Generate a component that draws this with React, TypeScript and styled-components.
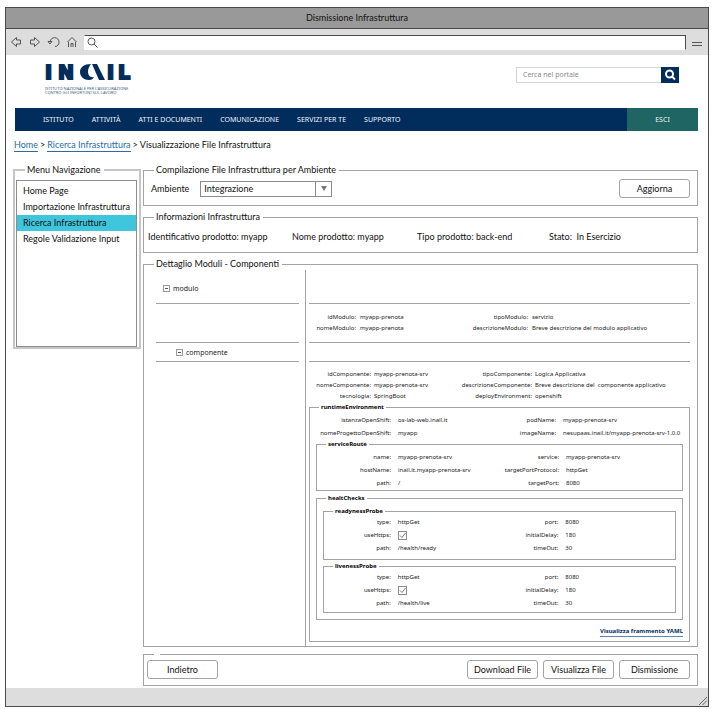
import React from "react";
import styled, { createGlobalStyle } from "styled-components";

const line = "#a3a3a3";
const soft = "#c6c6c6";
const navy = "#012d5c";
const smallFont = `"Noto Sans", "Open Sans", sans-serif`;

const GlobalStyle = createGlobalStyle`
  * { box-sizing: border-box; }
  body {
    margin: 0;
    background: #fff;
    color: #111;
    font-family: Lato, "Open Sans", sans-serif;
    font-size: 9px;
    line-height: 12px;
  }
  button, input, select { font: inherit; color: inherit; margin: 0; }
  dl, dd, ul { margin: 0; padding: 0; }
`;

const Window = styled.div`
  margin: 7px 3px 2px 5px;
  border: 1px solid #4a4a4a;
`;

const TitleBar = styled.header`
  display: flex;
  align-items: center;
  justify-content: center;
  height: 21px;
  background: #999;
  border-bottom: 1px solid #4a4a4a;
`;

const Toolbar = styled.div`
  display: flex;
  align-items: center;
  height: 26px;
  padding: 0 6px 0 5px;
  background: #ddd;
`;

const ToolButton = styled.button`
  display: flex;
  padding: 0;
  margin-right: 7px;
  border: 0;
  background: none;
`;

const AddressBar = styled.label`
  display: flex;
  flex: 1;
  align-items: center;
  height: 15px;
  padding-left: 2px;
  background: #fff;
  border: 1px solid #4a4a4a;
  border-bottom-color: #fff;
  border-left-color: #fff;
`;

const AddressInput = styled.input`
  flex: 1;
  min-width: 0;
  border: 0;
  outline: 0;
  background: none;
  padding: 0 4px;
`;

const MenuButton = styled(ToolButton)`
  margin: 4px 0 0 6px;
`;

const Page = styled.div`
  padding: 0 10px 2px 7px;
`;

const Banner = styled.div`
  display: flex;
  justify-content: space-between;
  align-items: flex-start;
  height: 53px;
  padding: 3px 19px 0 32px;
`;

const LogoNote = styled.p`
  margin: 3px 0 0;
  color: #45617f;
  font-family: ${smallFont};
  font-size: 4px;
  line-height: 4px;
`;

const Search = styled.form`
  display: flex;
  width: 163px;
  height: 16px;
  margin-top: 9px;
`;

const SearchInput = styled.input`
  flex: 1;
  min-width: 0;
  padding: 0 6px;
  border: 1px solid #d4d4d4;
  border-right: 0;
  font-family: ${smallFont};
  font-size: 7px;
  outline: 0;
  &::placeholder { color: #8a8a8a; }
`;

const SearchButton = styled.button`
  display: flex;
  align-items: center;
  justify-content: center;
  width: 18px;
  padding: 0;
  border: 0;
  background: ${navy};
`;

const Nav = styled.nav`
  display: flex;
  align-items: center;
  gap: 18px;
  height: 23px;
  margin-left: 2px;
  padding-left: 28px;
  background: ${navy};
  font-family: ${smallFont};
  font-size: 7px;
`;

const NavLink = styled.a`
  color: #f0f4f8;
  text-decoration: none;
`;

const ExitLink = styled(NavLink)`
  display: flex;
  align-items: center;
  justify-content: center;
  width: 71px;
  height: 100%;
  margin-left: auto;
  background: #1e6563;
`;

const Breadcrumb = styled.nav`
  display: flex;
  gap: 2px;
  margin: 8px 0 12px 1px;
`;

const CrumbLink = styled.a`
  color: #2a6ca3;
  text-decoration: none;
  border-bottom: 1px solid #2a6ca3;
`;

const Columns = styled.div`
  display: grid;
  grid-template-columns: 128px minmax(0, 1fr);
  gap: 2px;
  align-items: start;
`;

const Group = styled.fieldset<{ $gap?: number }>`
  min-width: 0;
  margin: 0 0 ${(p) => p.$gap ?? 0}px;
  padding: 0;
  border: 1px solid ${line};
`;

const Legend = styled.legend`
  margin-left: 10px;
  padding: 0 3px 0 2px;
`;

const MenuGroup = styled(Group)`
  border: 2px solid ${soft};
`;

const MenuList = styled.ul`
  height: 167px;
  margin: 4px 2px 0 1px;
  padding-top: 2px;
  border: 1px solid #8c8c8c;
  list-style: none;
`;

const MenuItem = styled.li<{ $active?: boolean }>`
  height: 16px;
  padding: 0 6px;
  line-height: 16px;
  background: ${(p) => (p.$active ? "#40c6dc" : "none")};
`;

const MenuLink = styled.a`
  display: block;
  overflow: hidden;
  color: inherit;
  text-decoration: none;
  white-space: nowrap;
`;

const FilterRow = styled.div`
  display: flex;
  align-items: center;
  height: 29px;
  padding: 0 7px 4px 7px;
`;

const SelectBox = styled.div`
  display: grid;
  grid-template-columns: 1fr 16px;
  align-items: stretch;
  width: 132px;
  height: 16px;
  margin: 0 auto 0 11px;
  border: 1px solid #8c8c8c;
`;

const Select = styled.select`
  grid-area: 1 / 1 / 2 / 3;
  padding: 0 3px;
  border: 0;
  appearance: none;
  background: none;
`;

const SelectArrow = styled.span`
  display: flex;
  grid-area: 1 / 2 / 2 / 3;
  align-items: center;
  justify-content: center;
  border-left: 1px solid #8c8c8c;
  pointer-events: none;
`;

const Button = styled.button`
  width: 71px;
  height: 19px;
  padding: 0;
  border: 1px solid ${line};
  border-radius: 3px;
  background: #fff;
  white-space: nowrap;
`;

const InfoRow = styled.div`
  display: grid;
  grid-template-columns: 144fr 125fr 132fr 148fr;
  height: 29px;
  padding: 8px 0 0 4px;
  white-space: nowrap;
`;

const Split = styled.div`
  display: grid;
  grid-template-columns: 162px minmax(0, 1fr);
  color: #222;
  font-family: ${smallFont};
  font-size: 6px;
  line-height: 11px;
`;

const Tree = styled.div`
  padding: 0 6px 0 12px;
  border-right: 1px solid ${line};
`;

const Detail = styled.div`
  padding: 0 7px 4px 3px;
`;

const Band = styled.div<{ $height: number; $indent?: number; $top?: number }>`
  display: flex;
  align-items: center;
  gap: 3px;
  height: ${(p) => p.$height}px;
  padding-top: ${(p) => p.$top ?? 0}px;
  padding-left: ${(p) => p.$indent ?? 0}px;
  border-bottom: 1px solid ${line};
  font-size: 7px;
`;

const ToggleButton = styled.button`
  display: flex;
  padding: 0;
  border: 0;
  background: none;
`;

const Fields = styled.dl<{ $cols: string; $row?: number; $pad?: string }>`
  display: grid;
  grid-template-columns: ${(p) => p.$cols};
  grid-auto-rows: ${(p) => p.$row ?? 13}px;
  align-items: center;
  padding: ${(p) => p.$pad ?? "0"};
  white-space: pre;
`;

const Term = styled.dt`
  display: flex;
  justify-content: flex-end;
`;

const Value = styled.dd<{ $gap?: number }>`
  padding-left: ${(p) => p.$gap ?? 7}px;
`;

const ModuleBlock = styled.div`
  height: 39px;
  border-bottom: 1px solid ${line};
`;

const SubGroup = styled(Group)<{ $inset?: number; $top?: number }>`
  margin: 0 ${(p) => p.$inset ?? 0}px ${(p) => p.$gap ?? 0}px;
  padding-top: ${(p) => p.$top ?? 0}px;
`;

const SubLegend = styled.legend`
  margin-left: 9px;
  padding: 0 2px;
  color: #000;
  font-weight: 700;
  line-height: 9px;
`;

const Check = styled.input`
  display: block;
  width: 9px;
  height: 9px;
  margin: 0;
  appearance: none;
  border: 1px solid #8c8c8c;
  background: #fff;
  & + svg { visibility: hidden; }
  &:checked + svg { visibility: visible; }
`;

const CheckBox = styled.label`
  display: inline-grid;
  vertical-align: middle;
  & > * { grid-area: 1 / 1; }
  & > svg { pointer-events: none; }
`;

const YamlLink = styled.a`
  display: block;
  width: max-content;
  margin: 7px 6px 4px auto;
  color: ${navy};
  border-bottom: 1px solid #5f87ae;
  font-weight: 700;
  line-height: 9px;
  text-decoration: none;
`;

const ActionLegend = styled.legend`
  width: 6px;
  height: 1px;
  margin-left: 10px;
  padding: 0;
`;

const Actions = styled.div`
  display: flex;
  gap: 5px;
  padding: 5px 7px 6px 3px;
`;

const Spacer = styled.span`
  flex: 1;
`;

const StatusBar = styled.footer`
  display: flex;
  align-items: flex-end;
  justify-content: flex-end;
  height: 18px;
  background: #ddd;
`;

const stroke = { fill: "none", stroke: "#555", strokeWidth: 1 };

const icons: { name: string; d: string; width: number }[] = [
  { name: "Indietro", width: 11, d: "M.5 6 5.500 1.500V4H9.500V8H5.500V10.500Z" },
  { name: "Avanti", width: 11, d: "M10.500 6 5.500 1.500V4H1.500V8H5.500V10.500Z" },
  { name: "Ricarica", width: 13, d: "M3 6C3.500 0 12 .5 12 6C12 8.500 10.500 10.500 8 10.500M1 5.500 3 8 5 5.500Z" },
  { name: "Home", width: 10, d: "M.5 6 5 1.500 9.500 6M1.500 6V11M8.500 6V11M4 11V7.500H6V11" },
];

function Logo() {
  return (
    <svg width="88" height="26" viewBox="0 0 88 26" role="img" aria-label="INAIL" display="block">
      <g
        fill={navy}
        stroke={navy}
        strokeWidth="2"
        fontFamily="'DejaVu Sans', sans-serif"
        fontWeight="700"
        fontSize="19"
      >
        <text x="0" y="21">I</text>
        <text x="13" y="21">N</text>
        <text x="62" y="21">I</text>
        <text x="73" y="21">L</text>
      </g>
      <path d="M46 6C39 6 35 9.500 35 14s4 8 9 8c3 0 4-1 5-3-4 1-6-2-6-5.500 0-3 1.500-5.500 3-7.500Z" fill={navy} />
      <path d="M47 6h5l8 16h-6Z" fill={navy} />
    </svg>
  );
}

function Toggle({ label }: { label: string }) {
  return (
    <>
      <ToggleButton type="button" aria-label={`Comprimi ${label}`}>
        <svg width="7" height="7" viewBox="0 0 7 7">
          <rect x=".5" y=".5" width="6" height="6" fill="none" stroke="#999" />
          <path d="M2 3.500H5" stroke="#555" />
        </svg>
      </ToggleButton>
      <span>{label}</span>
    </>
  );
}

type Row = [string, React.ReactNode, string, React.ReactNode];

function FieldGrid({ rows, cols, row, pad, gap }: { rows: Row[]; cols: string; row?: number; pad?: string; gap?: number }) {
  return (
    <Fields $cols={cols} $row={row} $pad={pad}>
      {rows.map(([a, b, c, d]) => (
        <React.Fragment key={a}>
          <Term>{a}:</Term>
          <Value $gap={gap}>{b}</Value>
          <Term>{c}:</Term>
          <Value $gap={gap}>{d}</Value>
        </React.Fragment>
      ))}
    </Fields>
  );
}

function Https({ probe }: { probe: string }) {
  return (
    <CheckBox>
      <Check type="checkbox" defaultChecked aria-label={`useHttps ${probe}`} />
      <svg width="9" height="9" viewBox="0 0 9 9">
        <path d="M2 4.500 4 6.500 7.500 2" fill="none" stroke="#777" />
      </svg>
    </CheckBox>
  );
}

function Probe({ name, path, gap, bottom }: { name: string; path: string; gap: number; bottom: number }) {
  return (
    <SubGroup $inset={6} $gap={gap}>
      <SubLegend>{name}</SubLegend>
      <FieldGrid
        cols="67fr 80fr 88fr minmax(0, 117fr)"
        pad={`0 0 ${bottom}px`}
        rows={[
          ["type", "httpGet", "port", "8080"],
          ["useHttps", <Https probe={name} />, "initialDelay", "180"],
          ["path", path, "timeOut", "30"],
        ]}
      />
    </SubGroup>
  );
}

const menu = ["Home Page", "Importazione Infrastruttura", "Ricerca Infrastruttura", "Regole Validazione Input"];
const sections = ["ISTITUTO", "ATTIVITÀ", "ATTI E DOCUMENTI", "COMUNICAZIONE", "SERVIZI PER TE", "SUPPORTO"];

export default function App() {
  return (
    <>
      <GlobalStyle />
      <Window>
        <TitleBar>Dismissione Infrastruttura</TitleBar>
        <Toolbar>
          {icons.map((icon) => (
            <ToolButton key={icon.name} type="button" aria-label={icon.name}>
              <svg width={icon.width} height="12" viewBox={`0 0 ${icon.width} 12`}>
                <path d={icon.d} {...stroke} />
              </svg>
            </ToolButton>
          ))}
          <AddressBar>
            <svg width="11" height="11" viewBox="0 0 11 11">
              <circle cx="4.500" cy="4.500" r="3.500" {...stroke} />
              <path d="M7 7 10.500 10.500" {...stroke} />
            </svg>
            <AddressInput type="text" aria-label="Indirizzo" />
          </AddressBar>
          <MenuButton type="button" aria-label="Menu">
            <svg width="10" height="5" viewBox="0 0 10 5">
              <path d="M0 .5H10M0 3.500H10" {...stroke} />
            </svg>
          </MenuButton>
        </Toolbar>

        <Page>
          <Banner>
            <div>
              <Logo />
              <LogoNote>
                ISTITUTO NAZIONALE PER L'ASSICURAZIONE
                <br />
                CONTRO GLI INFORTUNI SUL LAVORO
              </LogoNote>
            </div>
            <Search onSubmit={(e) => e.preventDefault()}>
              <SearchInput type="text" placeholder="Cerca nel portale" aria-label="Cerca nel portale" />
              <SearchButton type="submit" aria-label="Cerca">
                <svg width="12" height="12" viewBox="0 0 12 12" fill="none" stroke="#fff" strokeWidth="2">
                  <circle cx="5.500" cy="5" r="3.500" />
                  <path d="M8 7.500 11 10.500" />
                </svg>
              </SearchButton>
            </Search>
          </Banner>

          <Nav>
            {sections.map((s) => (
              <NavLink key={s} href="#">{s}</NavLink>
            ))}
            <ExitLink href="#">ESCI</ExitLink>
          </Nav>

          <Breadcrumb>
            <CrumbLink href="#">Home</CrumbLink>
            <span>&gt;</span>
            <CrumbLink href="#">Ricerca Infrastruttura</CrumbLink>
            <span>&gt;</span>
            <span>Visualizzazione File Infrastruttura</span>
          </Breadcrumb>

          <Columns>
            <MenuGroup>
              <Legend>Menu Navigazione</Legend>
              <MenuList>
                {menu.map((m) => (
                  <MenuItem key={m} $active={m === "Ricerca Infrastruttura"}>
                    <MenuLink href="#">{m}</MenuLink>
                  </MenuItem>
                ))}
              </MenuList>
            </MenuGroup>

            <main>
              <Group $gap={5}>
                <Legend>Compilazione File Infrastruttura per Ambiente</Legend>
                <FilterRow>
                  <label htmlFor="ambiente">Ambiente</label>
                  <SelectBox>
                    <Select id="ambiente" defaultValue="Integrazione">
                      <option>Integrazione</option>
                    </Select>
                    <SelectArrow>
                      <svg width="6" height="5" viewBox="0 0 6 5">
                        <path d="M0 0H6L3 5Z" fill="#777" />
                      </svg>
                    </SelectArrow>
                  </SelectBox>
                  <Button type="button">Aggiorna</Button>
                </FilterRow>
              </Group>

              <Group $gap={5}>
                <Legend>Informazioni Infrastruttura</Legend>
                <InfoRow>
                  <span>Identificativo prodotto: myapp</span>
                  <span>Nome prodotto: myapp</span>
                  <span>Tipo prodotto: back-end</span>
                  <span>Stato:&nbsp; In Esercizio</span>
                </InfoRow>
              </Group>

              <Group $gap={7}>
                <Legend>Dettaglio Moduli - Componenti</Legend>
                <Split>
                  <Tree>
                    <Band $height={34} $indent={7} $top={4}><Toggle label="modulo" /></Band>
                    <ModuleBlock />
                    <Band $height={19} $indent={20}><Toggle label="componente" /></Band>
                  </Tree>
                  <Detail>
                    <Band $height={34} />
                    <ModuleBlock>
                      <FieldGrid
                        cols="47fr 85fr 87fr minmax(0, 162fr)"
                        row={11}
                        pad="8px 0 0"
                        gap={4}
                        rows={[
                          ["idModulo", "myapp-prenota", "tipoModulo", "servizio"],
                          ["nomeModulo", "myapp-prenota", "descrizioneModulo", "Breve descrizione del modulo applicativo"],
                        ]}
                      />
                    </ModuleBlock>
                    <Band $height={19} />
                    <FieldGrid
                      cols="62fr 76fr 85fr minmax(0, 158fr)"
                      row={11}
                      pad="7px 0 1px"
                      gap={3}
                      rows={[
                        ["idComponente", "myapp-prenota-srv", "tipoComponente", "Logica Applicativa"],
                        ["nomeComponente", "myapp-prenota-srv", "descrizioneComponente", "Breve descrizione del  componente applicativo"],
                        ["tecnologia", "SpringBoot", "deployEnvironment", "openshift"],
                      ]}
                    />
                    <SubGroup>
                      <SubLegend>runtimeEnvironment</SubLegend>
                      <FieldGrid
                        cols="81fr 83fr 82fr minmax(0, 127fr)"
                        pad="2px 6px 0 0"
                        rows={[
                          ["istanzaOpenShift", "os-lab-web.inail.it", "podName", "myapp-prenota-srv"],
                          ["nomeProgettoOpenShift", "myapp", "imageName", "nesupaas.inail.it/myapp-prenota-srv-1.0.0"],
                        ]}
                      />
                      <SubGroup $inset={6} $gap={3}>
                        <SubLegend>serviceRoute</SubLegend>
                        <FieldGrid
                          cols="74fr 80fr 88fr minmax(0, 123fr)"
                          pad="2px 0 0"
                          rows={[
                            ["name", "myapp-prenota-srv", "service", "myapp-prenota-srv"],
                            ["hostName", "inail.it.myapp-prenota-srv", "targetPortProtocol", "httpGet"],
                            ["path", "/", "targetPort", "8080"],
                          ]}
                        />
                      </SubGroup>
                      <SubGroup $inset={6} $top={4}>
                        <SubLegend>healtChecks</SubLegend>
                        <Probe name="readynessProbe" path="/health/ready" gap={2} bottom={4} />
                        <Probe name="livenessProbe" path="/health/live" gap={6} bottom={2} />
                      </SubGroup>
                      <YamlLink href="#">Visualizza frammento YAML</YamlLink>
                    </SubGroup>
                  </Detail>
                </Split>
              </Group>

              <Group>
                <ActionLegend aria-label="Azioni" />
                <Actions>
                  <Button type="button">Indietro</Button>
                  <Spacer />
                  <Button type="button">Download File</Button>
                  <Button type="button">Visualizza File</Button>
                  <Button type="button">Dismissione</Button>
                </Actions>
              </Group>
            </main>
          </Columns>
        </Page>
        <StatusBar>
          <svg width="10" height="10" viewBox="0 0 10 10">
            <path d="M1 9 9 1M4.500 9 9 4.500" fill="none" stroke="#666" />
          </svg>
        </StatusBar>
      </Window>
    </>
  );
}
